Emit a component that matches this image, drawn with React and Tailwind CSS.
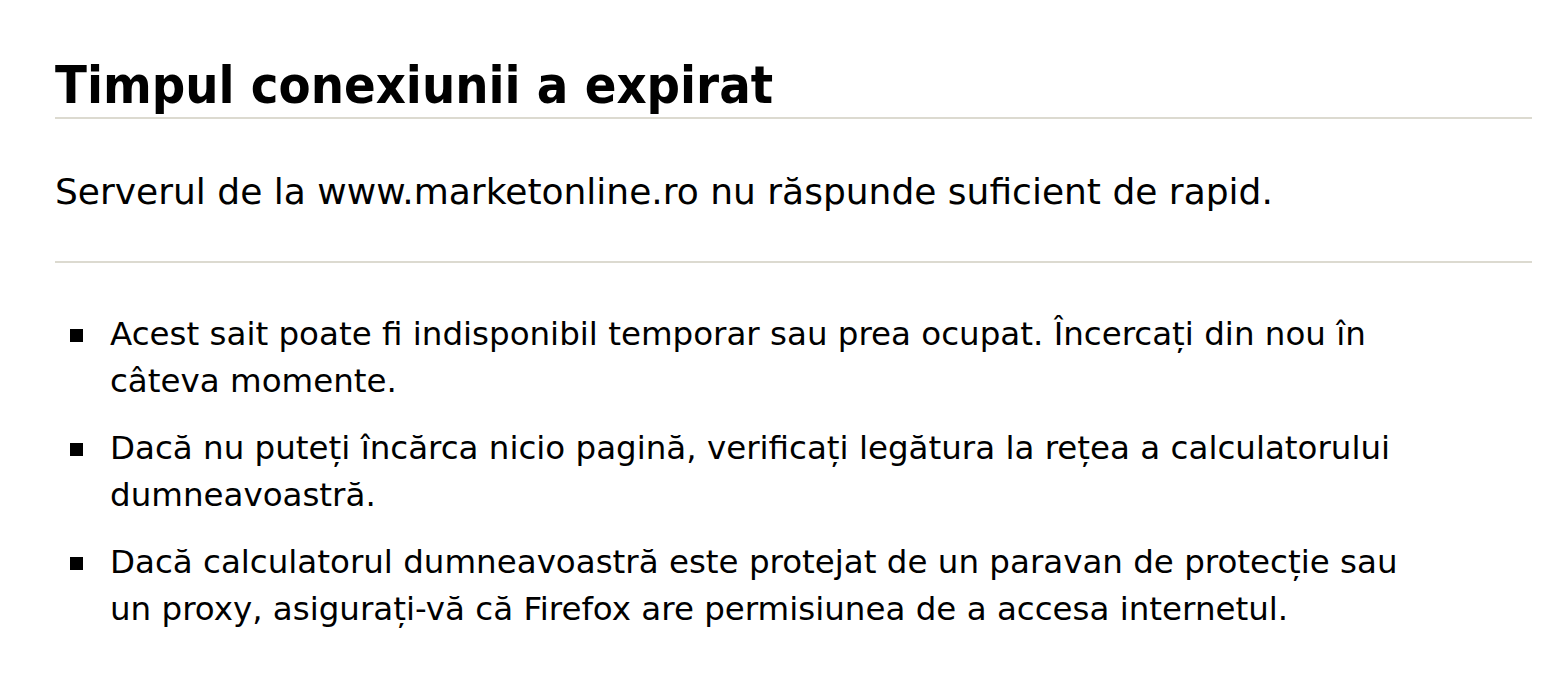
export default function App() {
  const cond = { fontFamily: '"DejaVu Sans Condensed", "DejaVu Sans", Tahoma, sans-serif' };
  const reg = { fontFamily: '"DejaVu Sans", Tahoma, sans-serif' };
  const items = [
    ["Acest sait poate fi indisponibil temporar sau prea ocupat. Încercați din nou în", "câteva momente."],
    ["Dacă nu puteți încărca nicio pagină, verificați legătura la rețea a calculatorului", "dumneavoastră."],
    ["Dacă calculatorul dumneavoastră este protejat de un paravan de protecție sau", "un proxy, asigurați-vă că Firefox are permisiunea de a accesa internetul."],
  ];
  return (
    <div className="min-h-[700px] w-full bg-white text-black">
      <div className="ml-[55px] w-[1477px] pt-[54px]">
        <h1 className="text-[52px] leading-[62px] font-bold whitespace-nowrap" style={cond}>Timpul conexiunii a expirat</h1>
        <div className="mt-[1px] h-[2px] bg-[#dcdad0]" />
        <p className="mt-[50px] text-[36px] leading-[46px] whitespace-nowrap" style={reg}>
          Serverul de la www.marketonline.ro nu răspunde suficient de rapid.
        </p>
        <div className="mt-[46px] h-[2px] bg-[#dcdad0]" />
        <ul className="mt-[48px] flex flex-col gap-[20px]" style={reg}>
          {items.map((it, i) => (
            <li key={i} className="flex items-start">
              <span className="ml-[15px] mt-[18px] h-[13px] w-[13px] shrink-0 bg-black" />
              <span className="ml-[27px] text-[32.5px] leading-[47px] whitespace-nowrap">
                {it[0]}
                <br />
                {it[1]}
              </span>
            </li>
          ))}
        </ul>
      </div>
    </div>
  );
}
